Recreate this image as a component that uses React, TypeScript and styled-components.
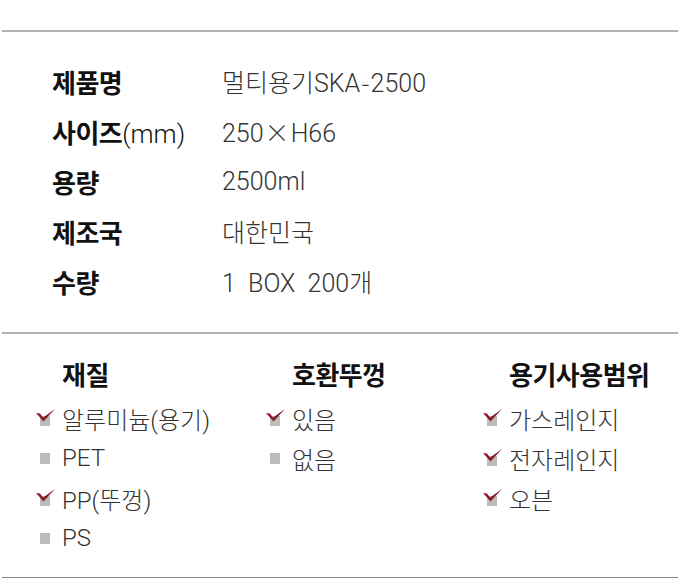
import React from "react";
import styled, { createGlobalStyle } from "styled-components";

const GlobalStyle = createGlobalStyle`
  body {
    margin: 0;
    background: #fff;
    font-family: Roboto, "Noto Sans CJK KR", sans-serif;
  }
`;

const Page = styled.div`
  width: 680px;
  padding-top: 30px;
`;

const Divider = styled.hr<{ $dark?: boolean }>`
  margin: 0 2px;
  border: 0;
  height: 2px;
  background: ${(p) => (p.$dark ? "#8a8a8a" : "#b4b4b4")};
`;

const SpecTable = styled.div`
  padding: 24px 0 26px 52px;
`;

const SpecRow = styled.div`
  display: flex;
  align-items: center;
  height: 50px;
`;

const Label = styled.div`
  width: 170px;
  font-family: "Noto Sans CJK KR", sans-serif;
  font-size: 26px;
  font-weight: 700;
  color: #111;
  letter-spacing: -0.5px;
`;

const Unit = styled.span`
  font-family: Roboto, "Noto Sans CJK KR", sans-serif;
  font-weight: 300;
  letter-spacing: 0;
`;

const Value = styled.div`
  font-size: 25px;
  font-weight: 300;
  color: #333;
  white-space: pre;
`;

const Sign = styled.span`
  font-family: "Noto Sans CJK KR", sans-serif;
  font-weight: 300;
  margin: 0 1px;
`;

const Options = styled.div`
  display: grid;
  grid-template-columns: 230px 217px 1fr;
  padding: 20px 0 19px 36px;
`;

const Column = styled.div`
  display: flex;
  flex-direction: column;
`;

const Heading = styled.div`
  height: 40px;
  line-height: 40px;
  padding-left: 26px;
  margin-bottom: 4px;
  font-family: "Noto Sans CJK KR", sans-serif;
  font-size: 26px;
  font-weight: 700;
  color: #111;
  letter-spacing: -0.5px;
`;

const Item = styled.div`
  display: flex;
  align-items: center;
  height: 40px;
  font-size: 24px;
  font-weight: 300;
  color: #333;
`;

const Mark = styled.svg`
  width: 20px;
  height: 18px;
  margin-right: 6px;
  flex-shrink: 0;
`;

const CheckMark = ({ on }: { on: boolean }) => (
  <Mark viewBox="0 0 20 18">
    {on ? (
      <>
        <rect x="4" y="7" width="10" height="10" fill="#bcbcbc" />
        <path d="M0 4 L4 4.5 L7 8.5 L19 0 L7.5 12.5 Z" fill="#8c1b2b" />
      </>
    ) : (
      <rect x="4" y="4" width="10" height="11" fill="#bcbcbc" />
    )}
  </Mark>
);

const specs: { label: string; unit?: string; value: React.ReactNode }[] = [
  { label: "제품명", value: <>멀티용기SKA<Sign>-</Sign>2500</> },
  { label: "사이즈", unit: "(mm)", value: <>250<Sign>×</Sign>H66</> },
  { label: "용량", value: "2500ml" },
  { label: "제조국", value: "대한민국" },
  { label: "수량", value: "1  BOX  200개" },
];

const options = [
  {
    title: "재질",
    items: [
      { text: "알루미늄(용기)", on: true },
      { text: "PET", on: false },
      { text: "PP(뚜껑)", on: true },
      { text: "PS", on: false },
    ],
  },
  {
    title: "호환뚜껑",
    items: [
      { text: "있음", on: true },
      { text: "없음", on: false },
    ],
  },
  {
    title: "용기사용범위",
    items: [
      { text: "가스레인지", on: true },
      { text: "전자레인지", on: true },
      { text: "오븐", on: true },
    ],
  },
];

const App = () => {
  return (
    <>
      <GlobalStyle />
      <Page>
        <Divider />
        <SpecTable>
          {specs.map((s) => (
            <SpecRow key={s.label}>
              <Label>
                {s.label}
                {s.unit && <Unit>{s.unit}</Unit>}
              </Label>
              <Value>{s.value}</Value>
            </SpecRow>
          ))}
        </SpecTable>
        <Divider />
        <Options>
          {options.map((col) => (
            <Column key={col.title}>
              <Heading>{col.title}</Heading>
              {col.items.map((it) => (
                <Item key={it.text}>
                  <CheckMark on={it.on} />
                  {it.text}
                </Item>
              ))}
            </Column>
          ))}
        </Options>
        <Divider $dark />
      </Page>
    </>
  );
};

export default App;
